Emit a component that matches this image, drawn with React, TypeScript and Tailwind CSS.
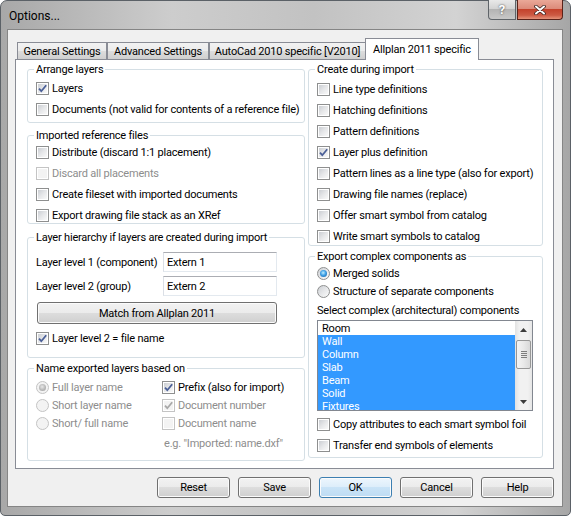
import React from "react";

const GRAY = "text-[#8d8d8d]";

function CheckBox({ checked = false, disabled = false }: { checked?: boolean; disabled?: boolean }) {
  return (
    <span
      className={`relative block h-[13px] w-[13px] shrink-0 border bg-white p-[1px] ${
        disabled ? "border-[#c4c4c4]" : "border-[#8e8f8f]"
      }`}
    >
      <span
        className={`block h-full w-full ${
          disabled
            ? "bg-[#f3f3f3]"
            : "bg-[linear-gradient(135deg,#cbced3_0%,#e6e7e9_50%,#f9f9f9_100%)]"
        }`}
      />
      {checked && (
        <svg viewBox="0 0 11 11" className="absolute left-0 top-0 h-[11px] w-[11px]" aria-hidden>
          <path
            d="M2 5.6L4.3 8.2L9.2 2.2"
            fill="none"
            stroke={disabled ? "#a8a8a8" : "#4a5f97"}
            strokeWidth="1.8"
          />
        </svg>
      )}
    </span>
  );
}

function Radio({ checked = false, disabled = false }: { checked?: boolean; disabled?: boolean }) {
  return (
    <span
      className={`flex h-[13px] w-[13px] shrink-0 items-center justify-center rounded-full border ${
        disabled
          ? "border-[#c4c4c4] bg-[#f3f3f3]"
          : "border-[#8e8f8f] bg-[linear-gradient(135deg,#cbced3_0%,#e6e7e9_50%,#fbfbfb_100%)]"
      }`}
    >
      {checked && (
        <span
          className={`h-[7px] w-[7px] rounded-full ${
            disabled
              ? "bg-[radial-gradient(circle_at_45%_40%,#e8e8e8_0%,#b8b8b8_55%,#9a9a9a_100%)]"
              : "bg-[radial-gradient(circle_at_45%_40%,#bfeeff_0%,#3fa0e6_45%,#135b9c_100%)]"
          }`}
        />
      )}
    </span>
  );
}

function CheckRow({ label, checked, disabled }: { label: string; checked?: boolean; disabled?: boolean }) {
  return (
    <div className="flex h-[15px] items-center gap-[3px]">
      <CheckBox checked={checked} disabled={disabled} />
      <span className={`whitespace-nowrap ${disabled ? GRAY : ""}`}>{label}</span>
    </div>
  );
}

function RadioRow({ label, checked, disabled }: { label: string; checked?: boolean; disabled?: boolean }) {
  return (
    <div className="flex h-[15px] items-center gap-[3px]">
      <Radio checked={checked} disabled={disabled} />
      <span className={`whitespace-nowrap ${disabled ? GRAY : ""}`}>{label}</span>
    </div>
  );
}

function Group({ title, className, children }: { title: string; className: string; children: React.ReactNode }) {
  return (
    <fieldset className={`rounded-[3px] border border-[#d5dfe5] ${className}`}>
      <legend className="ml-[6px] px-[2px] leading-[15px]">{title}</legend>
      {children}
    </fieldset>
  );
}

function TextBox({ value }: { value: string }) {
  return (
    <div className="flex h-[20px] w-[114px] items-center border border-[#e3e9ef] border-l-[#dbdfe6] border-t-[#abadb3] bg-white pl-[3px]">
      {value}
    </div>
  );
}

function Button({ label, primary, className = "w-[73px]" }: { label: string; primary?: boolean; className?: string }) {
  return (
    <div
      className={`flex h-[21px] items-center justify-center rounded-[3px] border shadow-[inset_0_0_0_1px_#fbfbfb] ${
        primary
          ? "border-[#3c7fb1] bg-[linear-gradient(180deg,#edf6fd_0%,#dcedfa_50%,#c9e3f7_50%,#bedcf3_100%)]"
          : "border-[#707070] bg-[linear-gradient(180deg,#f2f2f2_0%,#ebebeb_50%,#dddddd_50%,#cfcfcf_100%)]"
      } ${className}`}
    >
      {label}
    </div>
  );
}

function Tab({ label, width }: { label: string; width: string }) {
  return (
    <div
      className={`flex h-[17px] items-center justify-center border border-b-0 border-[#898c95] bg-[linear-gradient(180deg,#f2f2f2_0%,#ebebeb_50%,#dddddd_50%,#cfcfcf_100%)] ${width}`}
    >
      {label}
    </div>
  );
}

function ListBox() {
  const items = ["Room", "Wall", "Column", "Slab", "Beam", "Solid", "Fixtures"];
  return (
    <div className="flex h-[91px] w-[216px] border border-[#828790] bg-white">
      <div className="flex-1 overflow-hidden pt-[1px]">
        {items.map((it, i) => (
          <div
            key={it}
            className={`h-[13px] pl-[4px] leading-[13px] ${i > 0 ? "bg-[#3399ff] text-white" : ""}`}
          >
            {it}
          </div>
        ))}
      </div>
      <div className="flex w-[17px] flex-col bg-[linear-gradient(90deg,#e2e2e2_0%,#f1f1f1_25%,#f1f1f1_75%,#e6e6e6_100%)]">
        <div className="flex h-[17px] items-center justify-center">
          <svg viewBox="0 0 7 4" className="h-[4px] w-[7px]" aria-hidden>
            <path d="M0 4L3.5 0L7 4Z" fill="#3c3c3c" />
          </svg>
        </div>
        <div className="mx-[1px] mt-[2px] flex h-[29px] flex-col items-center justify-center gap-[1px] rounded-[2px] border border-[#979797] bg-[linear-gradient(90deg,#f4f4f4_0%,#e9e9e9_50%,#d9d9d9_100%)]">
          <span className="h-[1px] w-[6px] bg-[#7d7d7d]" />
          <span className="h-[1px] w-[6px] bg-[#7d7d7d]" />
          <span className="h-[1px] w-[6px] bg-[#7d7d7d]" />
          <span className="h-[1px] w-[6px] bg-[#7d7d7d]" />
        </div>
        <div className="flex-1" />
        <div className="flex h-[17px] items-center justify-center">
          <svg viewBox="0 0 7 4" className="h-[4px] w-[7px]" aria-hidden>
            <path d="M0 0L3.5 4L7 0Z" fill="#3c3c3c" />
          </svg>
        </div>
      </div>
    </div>
  );
}

function TitleBar() {
  return (
    <div className="flex h-[28px] items-start">
      <span className="pl-[8px] pt-[8px] text-[12px] leading-[15px] tracking-normal">Options...</span>
      <div className="ml-auto mr-[7px] -mt-[1px] flex gap-[1px]">
        <div className="flex h-[20px] w-[28px] items-center justify-center rounded-bl-[4px] border border-t-0 border-[#5f6469] bg-[linear-gradient(180deg,#e9e9e9_0%,#d3d3d3_45%,#b4b4b4_50%,#c8c8c8_100%)] text-[13px] font-bold text-white [text-shadow:0_0_2px_#2d2d2d]">
          ?
        </div>
        <div className="flex h-[20px] w-[46px] items-center justify-center rounded-br-[4px] border border-t-0 border-[#5a2219] bg-[linear-gradient(180deg,#eaa898_0%,#dc8b7a_45%,#c4422c_50%,#cd5a43_80%,#e5937a_100%)]">
          <svg viewBox="0 0 12 10" className="h-[10px] w-[12px]" aria-hidden>
            <path d="M2 1.5L10 8.5M10 1.5L2 8.5" stroke="#3b2420" strokeWidth="3.6" strokeLinecap="round" />
            <path d="M2 1.5L10 8.5M10 1.5L2 8.5" stroke="#ffffff" strokeWidth="2" strokeLinecap="round" />
          </svg>
        </div>
      </div>
    </div>
  );
}

export default function App() {
  return (
    <div className="h-[516px] w-[571px] bg-white font-[Roboto,sans-serif] text-[11px] leading-[15px] tracking-[-0.2px] text-black">
      <div className="flex h-full flex-col rounded-b-[5px] rounded-t-[7px] border border-[#5b6167] bg-[linear-gradient(90deg,#a8a8a8_0%,#cdcdcd_30%,#c2c2c2_55%,#d3d3d3_80%,#a6a6a6_100%)]">
        <TitleBar />
        <div className="mb-[8px] ml-[6px] mr-[7px] flex flex-1 flex-col border border-[#858585] bg-[#f0f0f0]">
          {/* Tabs */}
          <div className="ml-[9px] mt-[8px] flex h-[21px] items-end">
            <Tab label="General Settings" width="w-[90px]" />
            <Tab label="Advanced Settings" width="w-[102px]" />
            <Tab label="AutoCad 2010 specific [V2010]" width="w-[157px]" />
            <div className="relative z-10 -mb-[1px] -ml-[1px] flex h-[22px] w-[114px] items-start justify-center border border-b-0 border-[#898c95] bg-white pt-[3px]">
              Allplan 2011 specific
            </div>
          </div>

          {/* Tab page */}
          <div className="ml-[7px] flex h-[410px] w-[539px] gap-[3px] border border-[#898c95] bg-white pl-[11px] pt-[2px]">
            {/* Left column */}
            <div className="flex w-[278px] flex-col">
              <Group title="Arrange layers" className="h-[61px]">
                <div className="flex flex-col gap-[6px] pl-[8px] pt-[4px]">
                  <CheckRow label="Layers" checked />
                  <CheckRow label="Documents (not valid for contents of a reference file)" />
                </div>
              </Group>

              <Group title="Imported reference files" className="mt-[5px] h-[96px]">
                <div className="flex flex-col gap-[6px] pl-[8px] pt-[2px]">
                  <CheckRow label="Distribute (discard 1:1 placement)" />
                  <CheckRow label="Discard all placements" disabled />
                  <CheckRow label="Create fileset with imported documents" />
                  <CheckRow label="Export drawing file stack as an XRef" />
                </div>
              </Group>

              <Group title="Layer hierarchy if layers are created during import" className="mt-[6px] h-[128px]">
                <div className="flex flex-col pl-[8px] pt-[7px]">
                  <div className="grid grid-cols-[127px_114px] items-center">
                    <span className="whitespace-nowrap">Layer level 1 (component)</span>
                    <TextBox value="Extern 1" />
                  </div>
                  <div className="mt-[4px] grid grid-cols-[127px_114px] items-center">
                    <span className="whitespace-nowrap">Layer level 2 (group)</span>
                    <TextBox value="Extern 2" />
                  </div>
                  <div className="ml-[1px] mt-[6px]">
                    <Button label="Match from Allplan 2011" className="h-[22px] w-[240px]" />
                  </div>
                  <div className="mt-[7px]">
                    <CheckRow label="Layer level 2 = file name" checked />
                  </div>
                </div>
              </Group>

              <Group title="Name exported layers based on" className="mt-[3px] h-[100px]">
                <div className="pl-[8px] pt-[4px]">
                  <div className="grid grid-cols-[126px_1fr] gap-y-[3px]">
                    <RadioRow label="Full layer name" checked disabled />
                    <CheckRow label="Prefix (also for import)" checked />
                    <RadioRow label="Short layer name" disabled />
                    <CheckRow label="Document number" checked disabled />
                    <RadioRow label="Short/ full name" disabled />
                    <CheckRow label="Document name" disabled />
                  </div>
                  <div className={`ml-[128px] mt-[5px] h-[15px] whitespace-nowrap ${GRAY}`}>
                    e.g. "Imported: name.dxf"
                  </div>
                </div>
              </Group>
            </div>

            {/* Right column */}
            <div className="flex w-[235px] flex-col">
              <Group title="Create during import" className="h-[184px]">
                <div className="flex flex-col gap-[6px] pl-[8px] pt-[5px]">
                  <CheckRow label="Line type definitions" />
                  <CheckRow label="Hatching definitions" />
                  <CheckRow label="Pattern definitions" />
                  <CheckRow label="Layer plus definition" checked />
                  <CheckRow label="Pattern lines as a line type (also for export)" />
                  <CheckRow label="Drawing file names (replace)" />
                  <CheckRow label="Offer smart symbol from catalog" />
                  <CheckRow label="Write smart symbols to catalog" />
                </div>
              </Group>

              <Group title="Export complex components as" className="mt-[3px] h-[209px]">
                <div className="flex flex-col pl-[8px] pt-[2px]">
                  <RadioRow label="Merged solids" checked />
                  <div className="mt-[3px]">
                    <RadioRow label="Structure of separate components" />
                  </div>
                  <div className="mt-[4px] h-[15px] whitespace-nowrap">Select complex (architectural) components</div>
                  <div className="mt-[2px]">
                    <ListBox />
                  </div>
                  <div className="mt-[6px] flex flex-col gap-[6px]">
                    <CheckRow label="Copy attributes to each smart symbol foil" />
                    <CheckRow label="Transfer end symbols of elements" />
                  </div>
                </div>
              </Group>
            </div>
          </div>

          {/* Dialog buttons */}
          <div className="mt-[8px] flex justify-end gap-[8px] pr-[8px]">
            <Button label="Reset" />
            <Button label="Save" />
            <Button label="OK" primary />
            <Button label="Cancel" />
            <Button label="Help" />
          </div>
        </div>
      </div>
    </div>
  );
}
